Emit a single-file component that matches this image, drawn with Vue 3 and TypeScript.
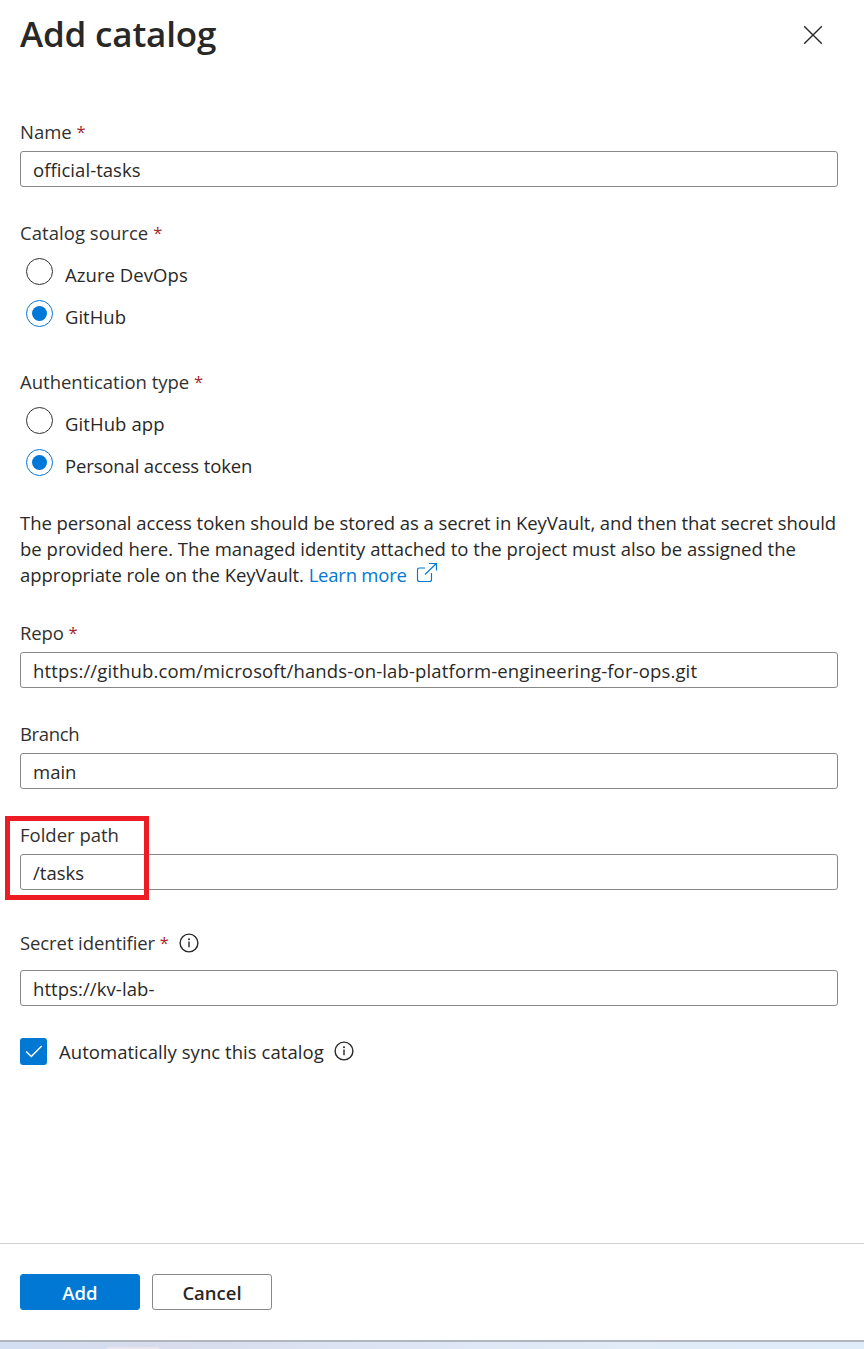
<script setup lang="ts">
import { ref } from 'vue'

interface Choice {
  value: string
  label: string
}

const sources: Choice[] = [
  { value: 'devops', label: 'Azure DevOps' },
  { value: 'github', label: 'GitHub' },
]
const authTypes: Choice[] = [
  { value: 'app', label: 'GitHub app' },
  { value: 'pat', label: 'Personal access token' },
]

const name = ref('official-tasks')
const source = ref('github')
const authType = ref('pat')
const repo = ref('https://github.com/microsoft/hands-on-lab-platform-engineering-for-ops.git')
const branch = ref('main')
const folder = ref('/tasks')
const secret = ref('https://kv-lab-')
const autoSync = ref(true)
</script>

<template>
  <div class="panel">
    <header class="head">
      <h1 class="title">Add catalog</h1>
      <button class="close" aria-label="Close">
        <svg width="20" height="20" viewBox="0 0 20 20"><path d="M1.2 1.2 18.8 18.8M18.8 1.2 1.2 18.8" /></svg>
      </button>
    </header>

    <main class="form">
      <div class="field">
        <label class="label l-name">Name <span class="req">*</span></label>
        <input v-model="name" class="input i-name" type="text" />
      </div>

      <div class="group">
        <div class="label l-source">Catalog source <span class="req">*</span></div>
        <div class="radios">
          <label v-for="c in sources" :key="c.value" class="radio" :class="[{ on: source === c.value }, 'r-' + c.value]">
            <input v-model="source" type="radio" name="source" :value="c.value" />
            <span class="dot"></span>
            <span class="radio-text">{{ c.label }}</span>
          </label>
        </div>
      </div>

      <div class="group">
        <div class="label l-auth">Authentication type <span class="req">*</span></div>
        <div class="radios">
          <label v-for="c in authTypes" :key="c.value" class="radio" :class="[{ on: authType === c.value }, 'r-' + c.value]">
            <input v-model="authType" type="radio" name="auth" :value="c.value" />
            <span class="dot"></span>
            <span class="radio-text">{{ c.label }}</span>
          </label>
        </div>
      </div>

      <p class="note">
        <span class="n1">The personal access token should be stored as a secret in KeyVault, and then that secret should</span><br />
        <span class="n2">be provided here. The managed identity attached to the project must also be assigned the</span><br />
        <span class="n3">appropriate role on the KeyVault. <a class="link">Learn more</a></span>
        <svg class="ext" width="22" height="22" viewBox="0 0 22 22">
          <path d="M9 6H3.5Q1.5 6 1.5 8V17.5Q1.5 19.5 3.5 19.5H13.5Q15.5 19.5 15.5 17.5V11M9 12.5 20.3 1.5M13 1.5H20.5V8.5" />
        </svg>
      </p>

      <div class="field">
        <label class="label l-repo">Repo <span class="req">*</span></label>
        <input v-model="repo" class="input i-repo" type="text" />
      </div>
      <div class="field">
        <label class="label l-branch">Branch</label>
        <input v-model="branch" class="input i-branch" type="text" />
      </div>
      <div class="field marked">
        <label class="label l-folder">Folder path</label>
        <input v-model="folder" class="input i-folder" type="text" />
        <div class="marker"></div>
      </div>
      <div class="field secret">
        <label class="label l-secret">
          <span>Secret identifier <span class="req">*</span></span>
          <svg class="info" width="20" height="20" viewBox="0 0 20 20">
            <circle cx="10" cy="10" r="8.9" /><path d="M10 8.6V14.2" /><circle class="pt" cx="10" cy="6.3" r="1" />
          </svg>
        </label>
        <input v-model="secret" class="input i-secret" type="text" />
      </div>

      <label class="sync">
        <input v-model="autoSync" type="checkbox" />
        <span class="box">
          <svg v-if="autoSync" width="27" height="27" viewBox="0 0 27 27"><path d="M6.2 13.5 11.3 18.5 21.7 8" /></svg>
        </span>
        <span class="sync-text">Automatically sync this catalog</span>
        <svg class="info" width="20" height="20" viewBox="0 0 20 20">
          <circle cx="10" cy="10" r="8.9" /><path d="M10 8.6V14.2" /><circle class="pt" cx="10" cy="6.3" r="1" />
        </svg>
      </label>
    </main>

    <footer class="foot">
      <button class="btn primary">Add</button>
      <button class="btn">Cancel</button>
    </footer>
    <div class="taskbar"><span class="tab"></span></div>
  </div>
</template>

<style>
body {
  margin: 0;
  background: #fff;
}
</style>

<style scoped>
.panel {
  box-sizing: border-box;
  display: flex;
  flex-direction: column;
  width: 864px;
  height: 1349px;
  overflow: hidden;
  background: #fff;
  color: #292827;
  font-family: "Open Sans", "Noto Sans", sans-serif;
  font-size: 18.5px;
  line-height: 26px;
}
.head {
  display: flex;
  justify-content: space-between;
  height: 119px;
  padding: 0 41px 0 20px;
}
.title {
  margin: 10px 0 0;
  font-size: 35px;
  font-weight: 600;
  line-height: 48px;
  letter-spacing: -0.18px;
  white-space: nowrap;
}
.close {
  width: 20px;
  height: 20px;
  margin-top: 25px;
  padding: 0;
  border: 0;
  background: none;
}
.close svg {
  display: block;
  fill: none;
  stroke: #292827;
  stroke-width: 1.4;
}
.form {
  flex: 1;
  padding: 0 26px 0 20px;
}
.field {
  display: flex;
  flex-direction: column;
  gap: 6px;
  margin-bottom: 33px;
}
.label {
  display: block;
  height: 26px;
  color: #323130;
  white-space: nowrap;
}
.req {
  color: #a4262c;
  font-size: 16.5px;
  line-height: 1;
  letter-spacing: 0;
  vertical-align: 1px;
}
.l-source {
  letter-spacing: 0.05px;
}
.l-branch {
  letter-spacing: -0.33px;
}
.l-repo {
  letter-spacing: -0.1px;
}
.input {
  box-sizing: border-box;
  width: 818px;
  height: 36px;
  padding: 1px 12px 0;
  border: 1px solid #8a8886;
  border-radius: 3px;
  outline: 0;
  background: #fff;
  color: #292827;
  font: inherit;
}
.i-name {
  letter-spacing: 0.05px;
}
.i-repo {
  letter-spacing: 0.15px;
}
.i-secret {
  letter-spacing: 0.08px;
}
.group {
  margin-bottom: 27px;
}
.radios {
  margin-top: 12px;
}
.radio {
  display: flex;
  align-items: flex-start;
  height: 42px;
  padding-left: 6px;
}
.radio input,
.sync input {
  display: none;
}
.dot {
  box-sizing: border-box;
  width: 27px;
  height: 27px;
  padding: 5px;
  border: 1px solid #323130;
  border-radius: 50%;
}
.on .dot {
  border-color: #0078d4;
}
.on .dot::before {
  content: "";
  display: block;
  width: 15px;
  height: 15px;
  border-radius: 50%;
  background: #0078d7;
}
.radio-text {
  margin: 4px 0 0 12px;
  white-space: nowrap;
}
.r-devops {
  letter-spacing: 0.06px;
}
.r-app {
  letter-spacing: 0.08px;
}
.r-pat {
  letter-spacing: -0.14px;
}
.note {
  margin: -8px 0 32px;
  height: 78px;
  white-space: nowrap;
}
.n1,
.n3 {
  letter-spacing: -0.063px;
}
.n2 {
  letter-spacing: 0.014px;
}
.link {
  color: #0078d4;
  letter-spacing: -0.22px;
}
.ext {
  margin: 0 0 -2px 5px;
  margin-left: 10px;
  margin-left: 9.5px;
  fill: none;
  stroke: #0078d4;
  stroke-width: 1.15;
}
.marked {
  position: relative;
  margin-bottom: 40px;
}
.marker {
  position: absolute;
  top: -6px;
  left: -15px;
  box-sizing: border-box;
  width: 144px;
  height: 84px;
  border: 5px solid #ed1c24;
}
.secret {
  gap: 14px;
  margin-bottom: 32px;
}
.l-secret {
  display: flex;
  align-items: center;
  gap: 10px;
  letter-spacing: -0.09px;
}
.info {
  flex: none;
  margin-bottom: 1px;
  fill: none;
  stroke: #292827;
  stroke-width: 1.4;
}
.info .pt {
  fill: #292827;
  stroke: none;
}
.sync {
  display: flex;
  align-items: center;
  height: 27px;
}
.box {
  width: 27px;
  height: 27px;
  margin-right: 12px;
  border-radius: 3px;
  background: #0078d4;
}
.box svg {
  display: block;
  fill: none;
  stroke: #fff;
  stroke-width: 1.5;
}
.sync-text {
  margin-right: 10px;
  letter-spacing: 0.05px;
  white-space: nowrap;
}
.foot {
  box-sizing: border-box;
  display: flex;
  gap: 12px;
  height: 97px;
  padding: 30px 20px;
  border-top: 1px solid #d2d0ce;
}
.btn {
  box-sizing: border-box;
  width: 120px;
  height: 36px;
  padding: 2px 0 0;
  border: 1px solid #8a8886;
  border-radius: 3px;
  background: #fff;
  color: #292827;
  font: inherit;
  font-weight: 600;
}
.primary {
  border-color: #0078d4;
  background: #0078d4;
  color: #fff;
}
.taskbar {
  box-sizing: border-box;
  height: 9px;
  padding: 5px 0 0 106px;
  border-top: 2px solid #b0b6c0;
  background: linear-gradient(90deg, #d3def2 0%, #d8dcec 20%, #dde5f4 45%, #e1ecf8 75%, #dfecfa 100%);
}
.tab {
  display: block;
  width: 54px;
  height: 4px;
  border-radius: 3px 3px 0 0;
  background: #e8e5f0;
}
</style>
